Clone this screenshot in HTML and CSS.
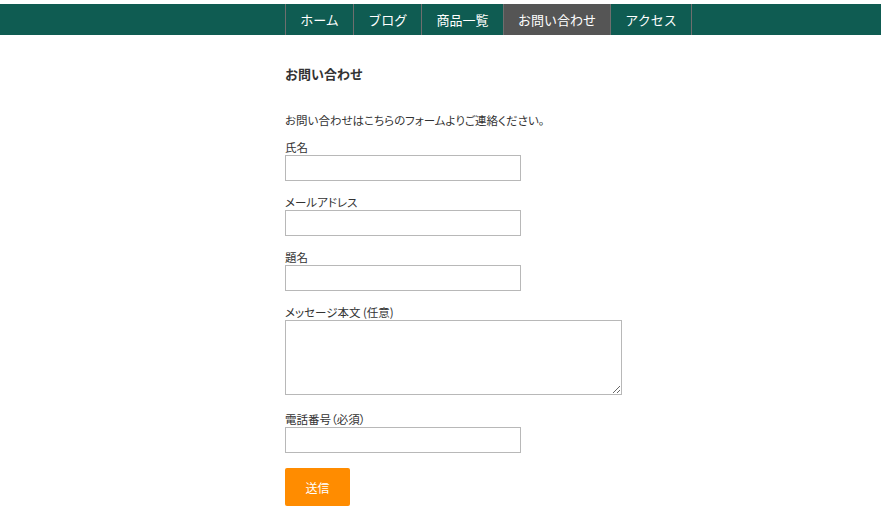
FILE: index.html
```html
<!DOCTYPE html>
<html lang="ja">
<head>
  <meta charset="UTF-8" />
  <meta name="viewport" content="width=device-width, initial-scale=1.0" />
  <title>お問い合わせ</title>
  <link rel="stylesheet" href="styles.css">
</head>
<body>
  <nav class="global-nav">
    <ul class="nav-list">
      <li><a href="#">ホーム</a></li>
      <li><a href="#">ブログ</a></li>
      <li><a href="#">商品一覧</a></li>
      <li class="current"><a href="#">お問い合わせ</a></li>
      <li><a href="#">アクセス</a></li>
    </ul>
  </nav>

  <main class="container">
    <h1 class="page-title">お問い合わせ</h1>
    <p class="lead">お問い合わせはこちらのフォームよりご連絡ください。</p>

    <form class="contact-form" onsubmit="return false;">
      <div class="field">
        <label for="name">氏名</label>
        <input id="name" type="text" />
      </div>
      <div class="field">
        <label for="email">メールアドレス</label>
        <input id="email" type="email" />
      </div>
      <div class="field">
        <label for="subject">題名</label>
        <input id="subject" type="text" />
      </div>
      <div class="field field-message">
        <label for="message">メッセージ本文 (任意)</label>
        <textarea id="message"></textarea>
      </div>
      <div class="field">
        <label for="tel">電話番号（必須）</label>
        <input id="tel" type="tel" />
      </div>
      <button class="submit" type="submit">送信</button>
    </form>
  </main>
</body>
</html>
```

FILE: styles.css
```css
* {
  margin: 0;
  padding: 0;
  box-sizing: border-box;
}
body {
  font-family: "Noto Sans CJK JP", "Noto Sans", sans-serif;
  font-size: 11.5px;
  color: #333;
  background-color: #fff;
  padding-top: 4px;
}
.global-nav {
  background-color: #0f5c52;
  padding-left: 285px;
}
.nav-list {
  display: flex;
  list-style: none;
}
.nav-list li {
  border-left: 1px solid #6e6e6e;
}
.nav-list li:last-child {
  border-right: 1px solid #6e6e6e;
}
.nav-list a {
  display: block;
  padding: 0 14.2px;
  line-height: 31px;
  font-size: 13px;
  color: #fff;
  text-decoration: none;
}
.nav-list .current {
  background-color: #555;
}
.container {
  padding-left: 285px;
}
.page-title {
  font-size: 13px;
  font-weight: bold;
  margin-top: 30px;
  line-height: 18px;
}
.lead {
  margin-top: 28px;
  line-height: 18px;
  font-feature-settings: "palt";
}
.contact-form {
  margin-top: 11px;
}
.field {
  margin-bottom: 14px;
}
.field-message {
  margin-bottom: 17px;
}
.field label {
  display: block;
  line-height: 15px;
  font-feature-settings: "palt";
}
.field input {
  display: block;
  width: 236px;
  height: 26px;
  border: 1px solid #b8b8b8;
  padding: 2px 4px;
  font-size: 12px;
}
.field textarea {
  display: block;
  width: 337px;
  height: 75px;
  border: 1px solid #b8b8b8;
  padding: 2px 4px;
  font-size: 12px;
}
.submit {
  margin-top: 1px;
  width: 65px;
  height: 38px;
  background-color: #ff8c00;
  color: #fff;
  border: none;
  border-radius: 2px;
  font-family: inherit;
  font-size: 12px;
}
```
